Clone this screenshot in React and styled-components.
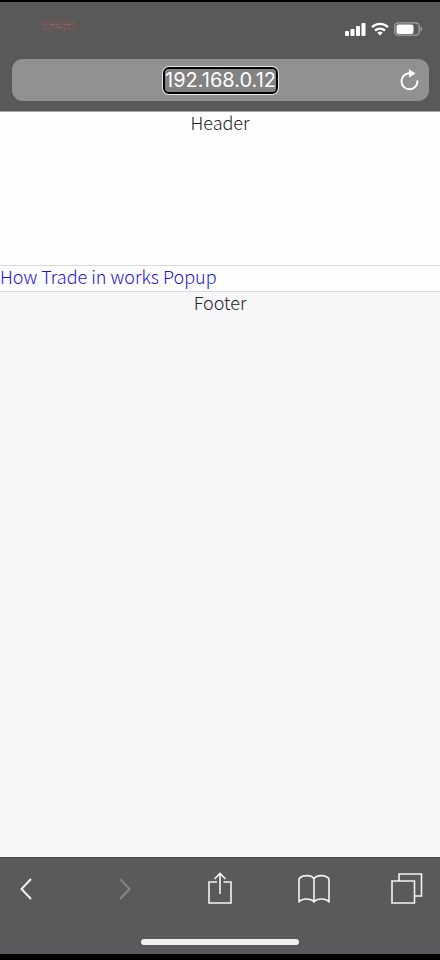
import React from "react";
import styled, { createGlobalStyle } from "styled-components";

const GlobalStyle = createGlobalStyle`
  * { box-sizing: border-box; }
  body { margin: 0; background: #000; }
`;

const Phone = styled.div`
  display: flex;
  flex-direction: column;
  min-height: 100vh;
  padding: 2px 0 6px;
  background: #000;
`;

const BrowserTop = styled.div`
  background: #5a595a;
  border-bottom: 1px solid #a6a6a6;
  padding: 0 11px 10px 12px;
`;

const StatusBar = styled.div`
  display: flex;
  justify-content: space-between;
  align-items: flex-start;
  height: 57px;
  padding: 14px 6px 0 30px;
`;

const StatusIcons = styled.div`
  display: flex;
  align-items: center;
  gap: 5px;
  padding-top: 6px;
`;

const AddressBar = styled.form`
  display: grid;
  grid-template-columns: 1fr auto 1fr;
  align-items: center;
  height: 42px;
  padding: 0 8px;
  border-radius: 11px;
  background: #919191;
`;

const Address = styled.input`
  grid-column: 2;
  width: 111px;
  height: 23px;
  padding: 0;
  border: 0;
  border-radius: 4px;
  outline: 2px solid #000;
  box-shadow: 0 0 0 3px #e6e6e6;
  background: #828282;
  color: #fff;
  font: 400 20px/23px Inter, "Liberation Sans", sans-serif;
  text-align: center;
`;

const ReloadButton = styled.button`
  justify-self: end;
  display: flex;
  padding: 0;
  border: 0;
  background: none;
`;

const Page = styled.div`
  flex: 1;
  display: flex;
  flex-direction: column;
  background: #f7f7fa;
  color: #222;
  font: 300 18px/20px "Noto Sans CJK KR", "Noto Sans", sans-serif;
`;

const PageHeader = styled.header`
  min-height: 153px;
  background: #fefefe;
  text-align: center;
`;

const LinkRow = styled.main`
  padding-bottom: 5px;
  border: solid #d9d9de;
  border-width: 1px 0;
  background: #fefefe;
`;

const PopupLink = styled.a`
  display: block;
  width: fit-content;
  color: #1a14d8;
  text-decoration: none;
`;

const PageFooter = styled.footer`
  text-align: center;
`;

const BrowserBottom = styled.div`
  display: flex;
  flex-direction: column;
  justify-content: space-between;
  align-items: center;
  height: 97px;
  padding-bottom: 9px;
  background: #5a595b;
  border-top: 1px solid #454446;
`;

const Toolbar = styled.nav`
  display: flex;
  justify-content: space-between;
  align-items: center;
  width: 100%;
  height: 62px;
  padding: 0 16px 0 6px;
`;

const ToolButton = styled.button`
  display: flex;
  justify-content: center;
  width: ${(p) => (p.$wide ? 40 : 34)}px;
  padding: 0;
  border: 0;
  background: none;
  color: ${(p) => (p.disabled ? "#858486" : "#f4f3f4")};
`;

const HomeIndicator = styled.div`
  width: 36%;
  height: 6px;
  border-radius: 3px;
  background: #f0eef0;
`;

const Line = ({ w, h, sw = 2, children }) => (
  <svg width={w} height={h} viewBox={`0 0 ${w} ${h}`} fill="none" stroke="currentColor" strokeWidth={sw} aria-hidden="true">
    {children}
  </svg>
);

const RecordingMark = () => (
  <svg width="40" height="20" viewBox="0 0 40 20" shapeRendering="crispEdges" aria-hidden="true">
    <defs>
      <pattern id="speckle" width="4" height="4" patternUnits="userSpaceOnUse">
        <rect width="1" height="1" fill="#a8504a" />
        <rect x="2" y="2" width="1" height="1" fill="#a8504a" />
        <rect x="2" width="1" height="1" fill="#7a5654" />
        <rect x="1" y="1" width="1" height="1" fill="#7a5654" />
        <rect x="3" y="3" width="1" height="1" fill="#7a5654" />
      </pattern>
    </defs>
    <rect x="0" y="4" width="34" height="11" fill="url(#speckle)" />
    <path d="M8 8h4v2M15 8v3h4M22 8h5v2" stroke="#a58e8c" strokeWidth="1" fill="none" opacity=".35" />
  </svg>
);

const Signal = () => (
  <svg width="21" height="14" viewBox="0 0 21 14" fill="#fff" aria-hidden="true">
    <rect x="0" y="9" width="4" height="5" rx="1" />
    <rect x="5.5" y="7" width="4" height="7" rx="1" />
    <rect x="11" y="4" width="4" height="10" rx="1" />
    <rect x="16.5" y="1" width="4" height="13" rx="1" />
  </svg>
);

const Wifi = () => (
  <svg width="18" height="14" viewBox="0 0 18 14" fill="none" stroke="#fff" strokeWidth="2.3" aria-hidden="true">
    <path d="M1 5.2a11.5 11.5 0 0 1 16 0" />
    <path d="M4 8.6a7.2 7.2 0 0 1 10 0" />
    <path d="M6.3 10.7a4 4 0 0 1 5.4 0L9 13.5z" fill="#fff" stroke="none" />
  </svg>
);

const Battery = () => (
  <svg width="29" height="14" viewBox="0 0 29 14" aria-hidden="true">
    <rect x=".8" y=".8" width="24.4" height="12.4" rx="3.5" fill="none" stroke="#a2a1a2" strokeWidth="1.3" />
    <rect x="2.5" y="2.5" width="17" height="9.5" rx="2" fill="#fff" />
    <path d="M26.5 4.5c2 .7 2 4.3 0 5z" fill="#a2a1a2" />
  </svg>
);

export default function App() {
  return (
    <Phone>
      <GlobalStyle />
      <BrowserTop>
        <StatusBar>
          <RecordingMark />
          <StatusIcons>
            <Signal />
            <Wifi />
            <Battery />
          </StatusIcons>
        </StatusBar>
        <AddressBar onSubmit={(e) => e.preventDefault()}>
          <Address aria-label="Address" defaultValue="192.168.0.12" />
          <ReloadButton type="button" aria-label="Reload">
            <svg width="24" height="24" viewBox="0 0 24 24" aria-hidden="true">
              <path d="M13 5.3h-1a8 8 0 1 0 8.5 8" fill="none" stroke="#fff" strokeWidth="2" strokeLinecap="round" />
              <path d="M12 1l6.5 4.500L12 9.500z" fill="#fff" />
            </svg>
          </ReloadButton>
        </AddressBar>
      </BrowserTop>
      <Page>
        <PageHeader>Header</PageHeader>
        <LinkRow>
          <PopupLink href="#popup">How Trade in works Popup</PopupLink>
        </LinkRow>
        <PageFooter>Footer</PageFooter>
      </Page>
      <BrowserBottom>
        <Toolbar aria-label="Browser">
          <ToolButton $wide aria-label="Back">
            <Line w={12} h={22}><path d="M11 1L1.5 11 11 21" /></Line>
          </ToolButton>
          <ToolButton $wide disabled aria-label="Forward">
            <Line w={12} h={22}><path d="M1 1l9.5 10L1 21" /></Line>
          </ToolButton>
          <ToolButton aria-label="Share">
            <Line w={26} h={34} sw={1.6}>
              <path d="M9 10H1v21h22V10h-7.500M12 22V1.500M6.500 7L12 1.500 17.500 7" />
            </Line>
          </ToolButton>
          <ToolButton aria-label="Bookmarks">
            <Line w={32} h={30} sw={1.6}>
              <path d="M16 28V5C14 .5 4 .5 1 5v23c3-4 12-4 15 0 3-4 12-4 15 0V5C28 .5 18 .5 16 5" strokeLinejoin="round" />
            </Line>
          </ToolButton>
          <ToolButton aria-label="Tabs">
            <Line w={32} h={32} sw={1.6}>
              <path d="M1 8h22.5v22H1zM8 8V1h22.5v22H23.5" />
            </Line>
          </ToolButton>
        </Toolbar>
        <HomeIndicator />
      </BrowserBottom>
    </Phone>
  );
}
